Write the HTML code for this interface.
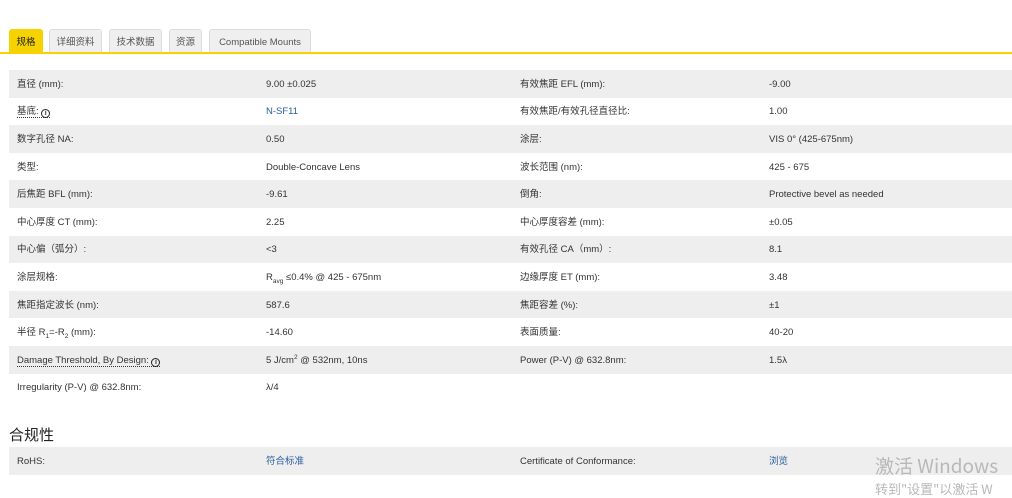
<!DOCTYPE html>
<html><head><meta charset="utf-8"><style>
body{margin:0;background:#fff;width:1012px;height:498px;overflow:hidden;font-family:"Liberation Sans","Noto Sans CJK SC",sans-serif;color:#333;font-size:9.5px;position:relative}
.tab{position:absolute;top:29px;height:23px;line-height:25px;background:#efefef;border:1px solid #ddd;border-bottom:none;border-radius:3px 3px 0 0;text-align:center;color:#555;font-size:9.5px;box-sizing:border-box}
.tab.a{background:#f6d200;border-color:#f6d200;color:#222}
.line{position:absolute;top:52px;left:0;width:1012px;height:2px;background:#f6d200}
table{position:absolute;left:9px;top:70px;width:1003px;border-collapse:collapse}
td{height:27.6px;padding:2px 0 0 8px;vertical-align:middle;white-space:nowrap;line-height:12px;box-sizing:border-box}
td>div{height:12px;line-height:12px;overflow:visible}
tr:nth-child(odd) td{background:#eeeeee}
td.c1{width:249px}td.c2{width:254px}td.c3{width:249px}
.lk{color:#2a5d9f}
.u{border-bottom:1px dotted #333}
.i{display:inline-block;width:9px;height:9px;border:1.3px solid #222;border-radius:50%;font-size:7px;line-height:7px;text-align:center;font-weight:bold;vertical-align:-1px;box-sizing:border-box}
sub,sup{font-size:6.5px;line-height:0}
h3{position:absolute;left:9px;top:426px;margin:0;font-size:15px;font-weight:normal;color:#222;line-height:20px}
.wm{position:absolute;color:#b8b8b8;font-family:"Noto Sans CJK SC",sans-serif;line-height:1}
</style></head><body>
<div class="tab a" style="left:9px;width:34px">规格</div>
<div class="tab" style="left:49px;width:53px">详细资料</div>
<div class="tab" style="left:109px;width:53px">技术数据</div>
<div class="tab" style="left:169px;width:33px">资源</div>
<div class="tab" style="left:209px;width:102px">Compatible Mounts</div>
<div class="line"></div>
<table>
<tr><td class="c1"><div>直径 (mm):</div></td><td class="c2"><div>9.00 ±0.025</div></td><td class="c3"><div>有效焦距 EFL (mm):</div></td><td><div>-9.00</div></td></tr>
<tr><td><div><span class="u">基底: <span class="i">i</span></span></div></td><td class="lk"><div>N-SF11</div></td><td><div>有效焦距/有效孔径直径比:</div></td><td><div>1.00</div></td></tr>
<tr><td><div>数字孔径 NA:</div></td><td><div>0.50</div></td><td><div>涂层:</div></td><td><div>VIS 0° (425-675nm)</div></td></tr>
<tr><td><div>类型:</div></td><td><div>Double-Concave Lens</div></td><td><div>波长范围 (nm):</div></td><td><div>425 - 675</div></td></tr>
<tr><td><div>后焦距 BFL (mm):</div></td><td><div>-9.61</div></td><td><div>倒角:</div></td><td><div>Protective bevel as needed</div></td></tr>
<tr><td><div>中心厚度 CT (mm):</div></td><td><div>2.25</div></td><td><div>中心厚度容差 (mm):</div></td><td><div>±0.05</div></td></tr>
<tr><td><div>中心偏（弧分）:</div></td><td><div>&lt;3</div></td><td><div>有效孔径 CA（mm）:</div></td><td><div>8.1</div></td></tr>
<tr><td><div>涂层规格:</div></td><td><div>R<sub>avg</sub> ≤0.4% @ 425 - 675nm</div></td><td><div>边缘厚度 ET (mm):</div></td><td><div>3.48</div></td></tr>
<tr><td><div>焦距指定波长 (nm):</div></td><td><div>587.6</div></td><td><div>焦距容差 (%):</div></td><td><div>±1</div></td></tr>
<tr><td><div>半径 R<sub>1</sub>=-R<sub>2</sub> (mm):</div></td><td><div>-14.60</div></td><td><div>表面质量:</div></td><td><div>40-20</div></td></tr>
<tr><td><div><span class="u">Damage Threshold, By Design: <span class="i">i</span></span></div></td><td><div>5 J/cm<sup>2</sup> @ 532nm, 10ns</div></td><td><div>Power (P-V) @ 632.8nm:</div></td><td><div>1.5λ</div></td></tr>
<tr><td style="background:#fff"><div>Irregularity (P-V) @ 632.8nm:</div></td><td style="background:#fff"><div>λ/4</div></td><td style="background:#fff"></td><td style="background:#fff"></td></tr>
</table>
<h3>合规性</h3>
<table style="top:447px"><tr><td class="c1"><div>RoHS:</div></td><td class="c2 lk"><div>符合标准</div></td><td class="c3"><div>Certificate of Conformance:</div></td><td class="lk"><div>浏览</div></td></tr></table>
<div class="wm" style="left:875px;top:456px;font-size:19px">激活 Windows</div>
<div class="wm" style="left:875px;top:482px;font-size:13px;white-space:nowrap">转到"设置"以激活 W</div>
</body></html>
